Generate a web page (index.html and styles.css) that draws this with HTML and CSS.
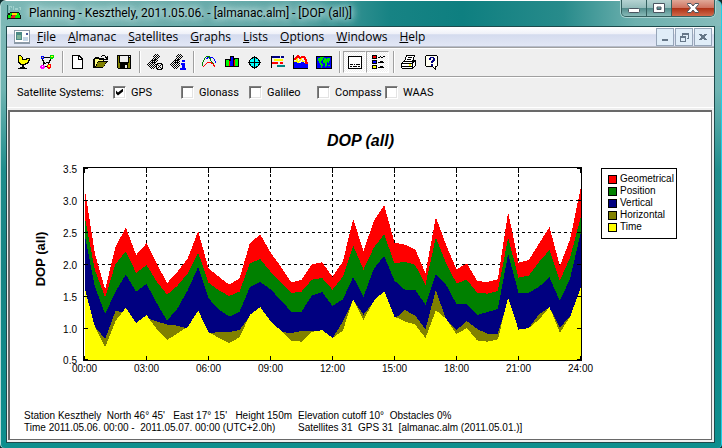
FILE: index.html
```html
<!DOCTYPE html>
<html lang="en">
<head>
<meta charset="utf-8">
<title>Planning - Keszthely</title>
<link rel="stylesheet" href="styles.css">
</head>
<body>
<div class="window">
  <header class="titlebar">
    <svg class="app-icon" viewBox="0 0 16 16" aria-hidden="true">
      <path fill="#2a6b68" d="M0 0h1v15h-1z"/><path fill="#9fd0cc" d="M2 1h3v1h-2v3h-1zM4 2h1v1h-2zM6 1h1v4h-1zM8 3h3v2h-3zM12 2h2v3h-1v-2h-1z"/>
      <path fill="#111" d="M3 7h9v1h1v2h1v4h-14v-4h1v-2h2z"/><path fill="#0e0" d="M1 10h2v-2h3v2h-2v3h-3zM10 8h2v2h1v3h-3z"/><path fill="#fd0" d="M5 8h5v2h-5z"/><path fill="#e22" d="M5 10h4v1h-1v2h-4v-2h1z"/><path fill="#0e0" d="M9 10h1v3h-2z"/>
    </svg>
    <h1 class="caption">Planning - Keszthely, 2011.05.06. - [almanac.alm] - [DOP (all)]</h1>
    <div class="window-buttons">
      <button type="button" class="wb" aria-label="Minimize"><svg viewBox="0 0 14 12"><rect x="1.500" y="6.500" width="11" height="4" rx="1"/></svg></button>
      <button type="button" class="wb" aria-label="Maximize"><svg viewBox="0 0 14 12"><path fill-rule="evenodd" d="M1.500 1.500h11v9h-11zM5 5v2.500h4v-2.500z"/></svg></button>
      <button type="button" class="wb wb-close" aria-label="Close"><svg viewBox="0 0 14 12"><path d="M1.500 1.500h3.500l2 2.500 2-2.500h3.500v1l-3 3.500 3 3.500v1h-3.500l-2-2.500-2 2.500h-3.500v-1l3-3.500-3-3.500z"/></svg></button>
    </div>
  </header>

  <main class="client">
    <nav class="menubar">
      <svg class="doc-icon" viewBox="0 0 16 14" aria-hidden="true"><path fill="#8c9aa8" d="M0 0h16v14h-16z"/><path fill="#fff" d="M1 1h14v11h-14z"/><path fill="#4c8a86" d="M2 2h6v8h-6z"/><path fill="#7fb39a" d="M3 5h4v4h-4z"/><path fill="#c5d6e6" d="M9 7h5v4h-5z"/><path fill="#4a5a9a" d="M12 3h2v2h-2z"/></svg>
      <button type="button" class="menu"><u>F</u>ile</button>
      <button type="button" class="menu"><u>A</u>lmanac</button>
      <button type="button" class="menu"><u>S</u>atellites</button>
      <button type="button" class="menu"><u>G</u>raphs</button>
      <button type="button" class="menu"><u>L</u>ists</button>
      <button type="button" class="menu"><u>O</u>ptions</button>
      <button type="button" class="menu"><u>W</u>indows</button>
      <button type="button" class="menu"><u>H</u>elp</button>
      <div class="mdi-buttons">
        <button type="button" class="mdi" aria-label="Minimize document"><svg viewBox="0 0 16 16"><path d="M5 10h6v2h-6z"/></svg></button>
        <button type="button" class="mdi" aria-label="Restore document"><svg viewBox="0 0 16 16"><path fill-rule="evenodd" d="M6 4h7v6h-2v-1h1v-3h-5v1h-1zM4 7h6v6h-6zM5 9v3h4v-3z"/></svg></button>
        <button type="button" class="mdi" aria-label="Close document"><svg viewBox="0 0 16 16"><path d="M4 5h3v1h2v-1h3v1h-1v1h-1v2h1v1h1v1h-3v-1h-2v1h-3v-1h1v-1h1v-2h-1v-1h-1z"/></svg></button>
      </div>
    </nav>

    <div class="toolbar" role="toolbar">
      <button type="button" class="tool" aria-label="Station"><svg viewBox="0 0 16 16"><path d="M2 1h3v1h1v1h1v2h3v-1h4v3h-1v2h-1v1h-2v1h-2v2h1v1h2v1h-9v-1h2v-1h2v-2h-2v-1h-1v-1h-1z"/><path fill="#ff0" d="M3 2h2v1h1v3h5v-1h2v1h-1v2h-1v1h-2v1h-4v-1h-1v-1h-1z"/></svg></button>
      <button type="button" class="tool" aria-label="Constellation"><svg viewBox="0 0 16 16"><path d="M4 3h8v1h-8zM3 4h1v2h1v2h1v2h-1v2h-1v-5h-1zM11 5h1v2h-1v2h-1v1h-1v-2h1v-2h1zM7 8h2v1h-2zM5 9h2v1h-2zM4 12h4v1h-4z"/><path fill="#00f" d="M2 2h3v3h-3z"/><path fill="#ff0" d="M3 3h1v1h-1z"/><path fill="#0d0" d="M11 1h4v3h-1v1h-3z"/><path fill="#ff0" d="M12 2h2v1h-2z"/><path fill="#f0f" d="M2 11h3v4h-3zM1 12h5v2h-5z"/><path fill="#fff" d="M3 12h1v1h-1z"/><path fill="#f00" d="M8 11h1v-1h3v4h-1v1h-2v-1h-1z"/><path fill="#ff0" d="M9 11h2v2h-2z"/></svg></button>
      <span class="sep"></span>
      <button type="button" class="tool" aria-label="New"><svg viewBox="0 0 16 16"><path d="M2 1h7l4 4v10h-11z"/><path fill="#fff" d="M3 2h5v4h4v8h-9z"/><path fill="#fff" d="M9 3l2 2h-2z"/></svg></button>
      <button type="button" class="tool" aria-label="Open"><svg viewBox="0 0 16 16"><path d="M9 1h3v1h1v1h1v-1h1v4h-4v-1h2v-1h-1v-2h-3v1h-1v-1h1zM1 4h1v-1h4v1h5v3h4v1h-1v1h-1v1h-1v2h-1v1h-1v1h-10v-9z"/><path fill="#ffff80" d="M2 5h4v1h4v1h-5v1h-1v2h-1v2h-1z"/><path fill="#808000" d="M5 8h8v1h-1v2h-1v2h-8v-1h1v-3h1z"/></svg></button>
      <button type="button" class="tool" aria-label="Save"><svg viewBox="0 0 16 16"><path d="M1 1h14v14h-13l-1-1z"/><path fill="#808000" d="M2 2h1v7h10v-5h1v10h-2v-5h-8v5h-2z"/><path fill="#efefef" d="M4 2h8v6h-8zM13 2h1v1h-1zM9 11h2v3h-2z"/></svg></button>
      <span class="sep"></span>
      <button type="button" class="tool" aria-label="Satellites on or off"><svg viewBox="0 0 16 16"><use href="#sat"/><path fill="#efefef" d="M10 8h4v1h1v1h1v5h-6v-1h-1v-5h1z"/><path fill="none" stroke="#000" d="M10.500 9.500h4l1 1v4l-1 1h-4l-1-1v-4zM10 10l5 5M15 10l-5 5"/></svg></button>
      <button type="button" class="tool" aria-label="Satellite information"><svg viewBox="0 0 16 16"><use href="#sat"/><path fill="#efefef" d="M10 5h6v11h-6z"/><path fill="#00f" d="M12 6h3v2h-3zM11 9h4v5h1v2h-6v-2h2v-3h-1z"/></svg></button>
      <span class="sep"></span>
      <button type="button" class="tool" aria-label="Elevation"><svg viewBox="0 0 16 16" class="line"><path stroke="#00f" d="M5 5l3-2h3l2 2 2 4"/><path stroke="#008000" d="M1 12l1-4 2-4 2-2h2l2 5 4 5"/><path stroke="#f00" d="M2 13l4-4 3-1 3 2 2 3"/></svg></button>
      <button type="button" class="tool" aria-label="Number of satellites"><svg viewBox="0 0 16 16"><path d="M1 5h5v-3h4v2h5v9h-14z"/><path fill="#0f0" d="M2 6h3v6h-3zM11 5h3v7h-3z"/><path fill="#f00" d="M5 7h1v5h-1zM10 6h1v6h-1z"/><path fill="#00f" d="M7 3h2v9h-3v-5h1z"/></svg></button>
      <button type="button" class="tool" aria-label="Sky plot"><svg viewBox="0 0 16 16"><circle cx="7.500" cy="8.500" r="5" fill="#0ff" stroke="#000"/><path d="M7 2h1v13h-1zM1 8h13v1h-13z"/></svg></button>
      <button type="button" class="tool" aria-label="Visibility"><svg viewBox="0 0 16 16"><path d="M1 2h1v12h-1z"/><path fill="#000080" d="M2 2h8v2h-8zM11 2h3v2h-3z"/><path fill="#ff0" d="M4 5h9v2h-9z"/><path fill="#f00" d="M2 8h6v2h-6zM10 8h3v2h-3z"/><path fill="#008080" d="M7 11h8v2h-8z"/></svg></button>
      <button type="button" class="tool" aria-label="DOP"><svg viewBox="0 0 16 16"><path fill="#00f" d="M1 14V8h2l1-2 1 3h2l2-2 2 2h1l1 1h2v4z"/><path class="line" stroke="#ff0" d="M1 7.500h2l1-3 1 4 2-2 1-2 2 3h2"/><path class="line" stroke="#f00" stroke-width="2" d="M1 6l2-2 2-2 2 2 2-1 2 0 2 3v3h2"/><path d="M0 1h1v14h-1zM0 14h15v1h-15z"/></svg></button>
      <button type="button" class="tool" aria-label="World map"><svg viewBox="0 0 16 16"><path d="M0 2h16v13h-16z"/><path fill="#00f" d="M1 3h14v11h-14z"/><path fill="#0d0" d="M2 4h2v-1h4v1h-1v2h-1v1h-1v2h1v1h1v2h-1v2h-1v-3h-1v-2h-1v-2h-1zM8 4h2v1h1v-1h3v3h-1v2h-1v-1h-1v4h-1v1h-1v-4h-2v-3h1zM12 11h2v1h-2z"/></svg></button>
      <span class="sep"></span>
      <button type="button" class="tool pressed" aria-pressed="true" aria-label="Footer"><svg viewBox="0 0 16 16"><path d="M1 2h14v13h-14z"/><path fill="#fff" d="M2 3h12v11h-12z"/><path d="M3 10h3v1h-3zM7 10h1v1h-1zM9 10h4v1h-4zM3 12h2v1h-2zM6 12h4v1h-4zM11 12h2v1h-2z"/></svg></button>
      <button type="button" class="tool pressed" aria-pressed="true" aria-label="Legend"><svg viewBox="0 0 16 16"><path d="M2 1h5v4h-5zM2 6h5v4h-5zM2 11h5v4h-5zM8 3h2v-1h1v1h2v-1h2v1h-2v1h-2v-1h-1v1h-2zM8 8h2v-1h3v1h1v1h-6zM8 13h2v-1h3v1h1v1h-6z"/><path fill="#f00" d="M3 2h3v2h-3z"/><path fill="#00f" d="M3 7h3v2h-3z"/><path fill="#ff0" d="M3 12h3v2h-3z"/></svg></button>
      <span class="sep"></span>
      <button type="button" class="tool" aria-label="Print"><svg viewBox="0 0 16 16"><g fill="#fff" stroke="#000"><path d="M.5 9.500l3-3h11v5l-3 3h-10l-1-1z"/><path d="M5.500 1.500h8l-2 6h-8z"/><path fill="none" d="M7 3.500h4M6 5.500h4M1 9.500h10l3-3M11.500 9.500v5M1 12.500h10"/></g><path fill="#ff0" d="M8 10h2v2h-2z"/></svg></button>
      <button type="button" class="tool" aria-label="Help"><svg viewBox="0 0 16 16"><path d="M2 1h11v1h1v10h-1v1h-1v3h-1v-1h-1v-1h-1v-1h-7v-1h-1v-10h1z"/><path fill="#fffff0" d="M2 2h11v10h-2v2h-1v-1h-1v-1h-7z"/><path fill="#000080" d="M6 3h4v1h1v3h-1v1h-1v1h-2v-2h1v-1h1v-2h-2v2h-2v-2h1zM7 10h2v2h-2z"/></svg></button>
    </div>

    <form class="systems">
      <span class="systems-title">Satellite Systems:</span>
      <label class="check"><input type="checkbox" checked>GPS</label>
      <label class="check"><input type="checkbox">Glonass</label>
      <label class="check"><input type="checkbox">Galileo</label>
      <label class="check"><input type="checkbox">Compass</label>
      <label class="check"><input type="checkbox">WAAS</label>
    </form>

    <section class="workspace">
      <h2 class="chart-title">DOP (all)</h2>
      <div class="chart-row">
        <svg class="chart" id="chart" viewBox="0 0 577 220" role="img" aria-label="DOP by time of day">
          <g id="grid"></g>
          <g id="areas"></g>
          <g id="axes"></g>
          <text class="axis-title" transform="translate(21 99) rotate(-90)">DOP (all)</text>
        </svg>
        <ul class="legend">
          <li><i class="swatch geometrical"></i>Geometrical</li>
          <li><i class="swatch position"></i>Position</li>
          <li><i class="swatch vertical"></i>Vertical</li>
          <li><i class="swatch horizontal"></i>Horizontal</li>
          <li><i class="swatch time"></i>Time</li>
        </ul>
      </div>
      <footer class="notes">
        <p>Station Keszthely  North 46° 45'   East 17° 15'   Height 150m
Time 2011.05.06. 00:00 -  2011.05.07. 00:00 (UTC+2.0h)</p>
        <p>Elevation cutoff 10°  Obstacles 0%
Satellites 31  GPS 31  [almanac.alm (2011.05.01.)]</p>
      </footer>
    </section>
  </main>
</div>

<svg class="defs" aria-hidden="true">
  <defs>
    <pattern id="mesh" width="2" height="2" patternUnits="userSpaceOnUse"><path d="M0 0h1v1h-1zM1 1h1v1h-1z"/></pattern>
    <g id="sat"><path fill="url(#mesh)" d="M7 0h3l3 3-3 5 1 2-4 5h-3l-4-4 4-5 2-2z"/><path d="M5 6h4v1h-4zM5 7h1v2h-1zM8 4h1v2h-1zM7 8h1v2h-1z"/></g>
  </defs>
</svg>
<script src="chart.js"></script>
</body>
</html>
```
FILE: styles.css
```css
* { box-sizing: border-box; }

body {
  margin: 0;
  background: #0c2b2c;
  font-family: "Open Sans", "Noto Sans", sans-serif;
  font-size: 12px;
  color: #000;
}

button {
  margin: 0;
  padding: 0;
  border: 0;
  background: none;
  font: inherit;
  color: inherit;
}

svg { display: block; }
.defs { position: absolute; width: 0; height: 0; }

.window {
  display: flex;
  flex-direction: column;
  min-height: 100vh;
  padding: 0 7px 5px 6px;
  border-radius: 6px 6px 4px 4px;
  background:
    linear-gradient(#fff, #fff) 0 0 / 100% 1px no-repeat,
    linear-gradient(90deg, #7db8b6 0, #5da5a4 40%, #178384 54%, #0e7f80 64%, #288b8b 78%, #6db0ae 88%, #86bcbb 100%) 0 0 / 100% 26px no-repeat,
    linear-gradient(#86bcbb, #6fb4b2 20%, #1f8d8c 38%, #168484 60%, #0d8f8e 100%);
  box-shadow: inset 1px 0 #b7dcda, inset -1px 0 #1fd0e8;
}

.titlebar {
  display: flex;
  align-items: center;
  height: 26px;
}

.app-icon {
  width: 16px;
  height: 16px;
  margin-left: 1px;
  shape-rendering: crispEdges;
}

.caption {
  flex: 1;
  margin: 0 0 0 6px;
  font-family: Roboto, "Open Sans", sans-serif;
  font-size: 12px;
  font-weight: 400;
  line-height: 20px;
  white-space: nowrap;
  text-shadow: 0 0 6px #d5eceb, 0 0 10px #d5eceb, 0 0 12px #c5e2e1;
}

.window-buttons {
  display: flex;
  align-self: flex-start;
  height: 17px;
  border: 1px solid #33605f;
  border-top: 0;
  border-radius: 0 0 5px 5px;
  overflow: hidden;
  box-shadow: 0 0 0 1px #a9d3d1;
}

.wb {
  display: grid;
  place-items: center;
  width: 25px;
  border-right: 1px solid #33605f;
  background: linear-gradient(#b5d3d2, #93bcbb 48%, #4f8a89 50%, #88bab8);
}

.wb svg { width: 14px; height: 12px; fill: #fff; stroke: #4a5560; }
.wb-close { width: 42px; border-right: 0; background: linear-gradient(#e0a898, #cf7360 48%, #ad2f14 50%, #d0694a); }

.client {
  display: flex;
  flex: 1;
  flex-direction: column;
  border: 1px solid #1d4a4c;
  background: #efefef;
}

.menubar {
  display: flex;
  align-items: center;
  height: 20px;
  background: linear-gradient(#fff, #eef0f8 38%, #d4dbee 40%, #e2e7f5);
  border-bottom: 1px solid #b6bcc9;
}

.doc-icon { width: 16px; height: 14px; margin: 0 1px 0 7px; }
.menu { padding: 0 6px; line-height: 18px; }
.mdi-buttons { display: flex; gap: 1px; margin-left: auto; padding-right: 2px; }

.mdi {
  width: 18px;
  height: 18px;
  border: 1px solid #96a5b8;
  background: #e0edf8;
}

.mdi svg { width: 16px; height: 16px; fill: #667788; shape-rendering: crispEdges; }

.toolbar {
  display: flex;
  align-items: center;
  height: 30px;
  padding: 0 5px;
  border-top: 1px solid #a0a0a0;
  border-bottom: 1px solid #a0a0a0;
  box-shadow: inset 0 1px #fff, 0 1px #fff;
}

.tool {
  display: grid;
  place-items: center;
  width: 23px;
  height: 22px;
}

.tool svg { width: 16px; height: 16px; shape-rendering: crispEdges; }
.line { fill: none; }
.pressed {
  border: 1px solid #fff;
  border-top-color: #a0a0a0;
  border-left-color: #a0a0a0;
  background: repeating-conic-gradient(#fff 0 25%, #efefef 0 50%) 0 0 / 2px 2px;
}

.sep { width: 8px; height: 22px; display: flex; justify-content: center; }
.sep::before { content: ""; width: 1px; background: #a0a0a0; box-shadow: 1px 0 #fff; }

.systems {
  display: grid;
  grid-template-columns: 96px repeat(5, 68px);
  align-items: center;
  height: 31px;
  padding-left: 10px;
  border-bottom: 1px solid #fff;
  font-family: Roboto, "Liberation Sans", sans-serif;
  font-size: 11px;
  white-space: nowrap;
}

.check { display: flex; align-items: center; gap: 5px; }

.check input {
  appearance: none;
  width: 13px;
  height: 13px;
  margin: 0;
  border: 1px solid #fff;
  border-top-color: #808080;
  border-left-color: #808080;
  background: #fff;
  box-shadow: inset 1px 1px #696969, inset -1px -1px #e3e3e3;
}

.check input:checked::before {
  content: "";
  display: block;
  width: 7px;
  height: 7px;
  margin: 2px;
  background: #000;
  clip-path: polygon(0 28%, 28% 57%, 100% 0, 100% 43%, 28% 100%, 0 71%);
}

.workspace {
  display: flex;
  flex: 1;
  flex-direction: column;
  margin: 2px 2px 2px 1px;
  border: 1px solid #696969;
  border-width: 2px 1px 1px 2px;
  background: #fff;
  font-family: "Liberation Sans", Arial, sans-serif;
  font-size: 10px;
}

.chart-title {
  margin: 19px 0 9px;
  font-size: 16px;
  font-style: italic;
  line-height: 20px;
  text-align: center;
}

.chart-row {
  display: grid;
  grid-template-columns: 1fr 76px;
  align-items: start;
  padding: 0 34px 0 14px;
}

.chart { width: 100%; height: auto; }
.chart polygon, .chart path { shape-rendering: crispEdges; }
.grid-line { fill: none; stroke: #000; stroke-dasharray: 3 3; }
.axis-line { fill: none; stroke: #000; }
.axis-title { font-size: 13px; font-weight: 700; text-anchor: middle; }
.label-x { text-anchor: middle; }
.label-y { text-anchor: end; }

.geometrical { background: #f00; fill: #f00; }
.position { background: #008000; fill: #008000; }
.vertical { background: #000080; fill: #000080; }
.horizontal { background: #808000; fill: #808000; }
.time { background: #ff0; fill: #ff0; }

.legend {
  margin: 8px 0 0;
  padding: 4px 0 5px 6px;
  border: 1px solid #000;
  list-style: none;
  line-height: 12px;
}

.legend li { display: flex; align-items: center; gap: 3px; }
.swatch { width: 9px; height: 9px; border: 1px solid #000; }

.notes {
  display: grid;
  grid-template-columns: 274px 1fr;
  margin-top: 30px;
  padding-left: 14px;
  line-height: 12px;
}

.notes p { margin: 0; white-space: pre; }
```
FILE: chart.js
```js
// Heights are thirds of a pixel below the top of the plotting sheet, one value per half hour.
const SHEET_TOP = -40;
const LEFT = 60.5;
const STEP = 31 / 3;
const BASE = 200;

const series = {
  geometrical: [201,400,508,380,323,405,370,432,489,455,415,333,445,470,494,475,370,343,397,440,487,480,433,427,470,425,297,393,303,255,368,374,388,460,291,375,448,430,483,486,478,276,428,420,370,321,438,357,207],
  position: [286,450,532,432,394,459,435,485,524,497,460,398,488,511,528,515,430,417,455,487,519,515,479,474,509,470,377,449,383,343,430,425,435,494,352,430,490,479,518,521,513,353,473,467,425,390,482,412,294],
  vertical: [341,500,582,515,464,515,492,550,602,565,510,441,535,568,590,575,502,486,508,540,575,575,527,516,558,538,471,530,446,408,482,509,510,554,463,495,552,552,585,576,567,402,518,518,500,472,543,475,341],
  horizontal: [505,620,657,573,577,609,595,604,614,617,626,580,640,636,636,630,588,565,605,636,639,633,633,632,655,605,540,584,545,515,597,570,587,628,510,600,630,603,627,641,641,540,630,624,582,563,622,590,510],
  time: [502,620,682,603,563,609,585,628,660,640,620,572,636,654,669,652,585,561,603,632,662,665,636,630,654,632,537,599,543,513,590,604,614,654,571,596,642,624,661,665,658,533,629,624,598,561,638,590,505]
};

function add(parent, tag, attrs, text) {
  const el = document.createElementNS("http://www.w3.org/2000/svg", tag);
  for (const key in attrs) el.setAttribute(key, attrs[key]);
  if (text) el.textContent = text;
  document.getElementById(parent).appendChild(el);
}

for (const name in series) {
  const top = series[name].map((v, i) => (LEFT + i * STEP).toFixed(2) + "," + (v / 3 + SHEET_TOP).toFixed(2));
  add("areas", "polygon", { class: name, points: `${LEFT},${BASE} ${top.join(" ")} ${LEFT + 48 * STEP},${BASE}` });
}

add("axes", "path", { class: "axis-line", d: "M59.5 7.5H557.500V200.500H59.500Z" });

for (let i = 0; i <= 8; i++) {
  const x = i === 0 ? 60.5 : 60.5 + i * 62;
  if (i > 0 && i < 8) add("grid", "path", { class: "grid-line", d: `M${x} 8V200` });
  add("axes", "path", { class: "axis-line", d: `M${x} 8v5M${x} 200v-4` });
  add("axes", "text", { class: "label-x", x: x, y: 212 }, String(i * 3).padStart(2, "0") + ":00");
}

for (let i = 0; i <= 6; i++) {
  const y = 8.5 + i * 32;
  if (i > 0 && i < 6) add("grid", "path", { class: "grid-line", d: `M60 ${y}H557` });
  add("axes", "path", { class: "axis-line", d: `M60 ${Math.min(y, 199.5)}h4M557 ${Math.min(y, 199.5)}h-4` });
  add("axes", "text", { class: "label-y", x: 53, y: Math.min(y, 199.5) + 4 }, (3.5 - i * 0.5).toFixed(1));
}
```
